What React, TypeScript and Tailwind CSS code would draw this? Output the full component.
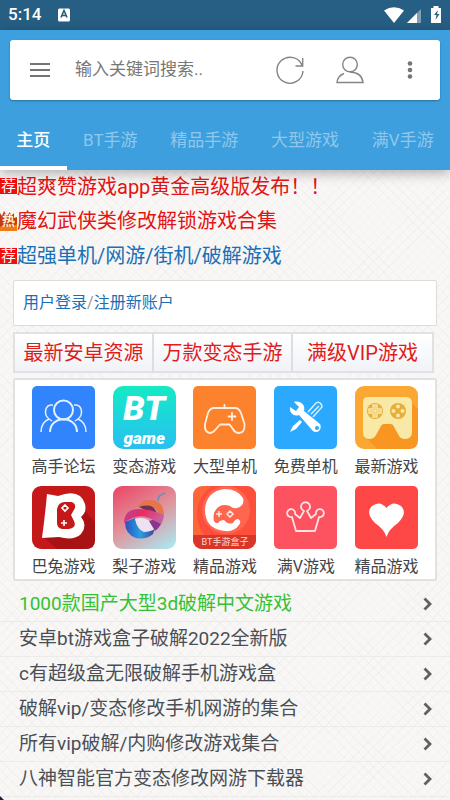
import React from 'react';

const tabs = ['主页', 'BT手游', '精品手游', '大型游戏', '满V手游'];

const links = [
  '1000款国产大型3d破解中文游戏',
  '安卓bt游戏盒子破解2022全新版',
  'c有超级盒无限破解手机游戏盒',
  '破解vip/变态修改手机网游的集合',
  '所有vip破解/内购修改游戏集合',
  '八神智能官方变态修改网游下载器',
];

function StatusBar() {
  return (
    <div className="flex h-[30px] items-center bg-[#265f83] px-2 text-white">
      <span className="text-[17px] font-medium">5:14</span>
      <svg className="ml-4 h-[14px] w-[14px]" viewBox="0 0 14 14" aria-hidden="true">
        <rect x="1" y="0.500" width="12" height="13" rx="1.500" fill="#fff" />
        <path d="M4 9.500L7 2.500l3 7M5 7.500h4" fill="none" stroke="#265f83" strokeWidth="1.600" />
      </svg>
      <svg className="ml-auto h-[18px] w-[58px]" viewBox="0 0 58 18" aria-hidden="true">
        <path d="M0 4.500Q10 -2 20 4.500L10 17z" fill="#fff" />
        <path d="M37 3v14H23z" fill="#7fa1b6" />
        <path d="M33 7v10H23z" fill="#fff" />
        <path d="M47 2h2.500V0h5v2H57v15H47z" fill="#fff" />
        <path d="M54 4l-4 5h2.500l-1 5 4-6H53z" fill="#265f83" />
      </svg>
    </div>
  );
}

function Header() {
  return (
    <header className="relative bg-[#3d9fdd] pt-[10px] shadow-[0_3px_12px_rgba(0,0,0,0.3)]">
      <div className="mx-[10px] flex h-[60px] items-center rounded-[3px] bg-white pr-[25px] pl-5 shadow-[0_1px_2px_rgba(0,0,0,0.3)]">
        <button aria-label="菜单" className="h-5 w-5 shrink-0">
          <svg viewBox="0 0 20 20" className="h-5 w-5" stroke="#757575" strokeWidth="2">
            <path d="M0 4h20M0 10h20M0 16h20" />
          </svg>
        </button>
        <input
          aria-label="搜索"
          placeholder="输入关键词搜索.."
          className="ml-[25px] min-w-0 flex-1 bg-transparent text-[17px] outline-none placeholder:text-[#777]"
        />
        <button aria-label="刷新" className="h-7 w-7 shrink-0">
          <svg viewBox="0 0 28 28" className="h-7 w-7" fill="none" stroke="#858585" strokeWidth="1.400">
            <path d="M27 15A13 13 0 1 1 26.300 10M26.700 2v8H19.500" />
          </svg>
        </button>
        <button aria-label="用户" className="ml-8 h-7 w-7 shrink-0">
          <svg viewBox="0 0 28 28" className="h-7 w-7" fill="none" stroke="#858585" strokeWidth="1.400">
            <circle cx="14" cy="8.500" r="7.300" />
            <path d="M8 17.500Q1.500 20 1 26.500h26Q26 16.500 14 16" />
          </svg>
        </button>
        <button aria-label="更多" className="ml-[41px] h-5 w-[10px] shrink-0">
          <svg viewBox="0 0 10 20" className="h-5 w-[10px]" fill="#757575">
            <circle cx="5" cy="3.500" r="2.300" />
            <circle cx="5" cy="10" r="2.300" />
            <circle cx="5" cy="16.500" r="2.300" />
          </svg>
        </button>
      </div>
      <nav className="mt-[10px] flex h-[60px]">
        {tabs.map((tab, i) => (
          <button
            key={tab}
            className={
              i === 0
                ? 'flex-auto border-b-4 border-white pt-[6px] text-[17px] font-medium whitespace-nowrap text-white'
                : 'flex-auto border-b-4 border-transparent pt-[6px] text-[17px] whitespace-nowrap text-[#8fc8ec]'
            }
          >
            {tab}
          </button>
        ))}
      </nav>
    </header>
  );
}

function RecommendBadge() {
  return (
    <span className="mb-[2px] flex h-4 w-[17px] shrink-0 items-center justify-center bg-[#f00f0f] text-[15px] leading-4 text-white">
      荐
    </span>
  );
}

function HotBadge() {
  return (
    <span className="relative mb-[2px] flex h-5 w-[17px] shrink-0 items-center justify-center text-[13px] leading-4 font-bold text-[#fff0d0]">
      <svg className="absolute inset-0 h-5 w-[17px]" viewBox="0 0 17 20" aria-hidden="true">
        <path d="M0 20V2l2 3 2-5 3 5 3-4 1 4 3-3v5l3-1v14z" fill="#c83a10" />
        <path d="M0 16l3-2 3 2 3-2 3 2 5-3v7H0z" fill="#ef7b15" />
      </svg>
      <span className="relative">热</span>
    </span>
  );
}

function Notices() {
  return (
    <div className="text-[20px] leading-[35px] whitespace-nowrap">
      <a href="#n1" className="flex h-[34px] items-center text-[#e41414]">
        <RecommendBadge />
        超爽赞游戏app黄金高级版发布！！
      </a>
      <a href="#n2" className="flex items-center text-[#e41414]">
        <HotBadge />
        魔幻武侠类修改解锁游戏合集
      </a>
      <a href="#n3" className="flex items-center text-[#1a6fb5]">
        <RecommendBadge />
        超强单机/网游/街机/破解游戏
      </a>
    </div>
  );
}

const iconBox = 'h-[63px] w-[63px]';

function ForumIcon() {
  return (
    <svg viewBox="0 0 63 63" className={iconBox} aria-hidden="true">
      <rect width="63" height="63" rx="5" fill="#3184fb" />
      <g fill="none" stroke="#e4f0ff" strokeWidth="1.500">
        <g strokeWidth="2">
          <circle cx="31.500" cy="24" r="9.500" />
          <path d="M18 46C18 29 45 29 45 46" />
        </g>
        <path d="M21 19C13 18 11 28 17 33C12 35 9 40 9 46M17 33l3 2M42 19C50 18 52 28 46 33C51 35 54 40 54 46M46 33l-3 2" />
      </g>
    </svg>
  );
}

function BtGameIcon() {
  return (
    <div className="flex h-[63px] w-[63px] flex-col items-center justify-center rounded-[10px] bg-linear-to-b from-[#16eac4] to-[#29bff0] font-black text-white italic">
      <span className="text-[34px] leading-10">BT</span>
      <span className="text-[17px] leading-5">game</span>
    </div>
  );
}

function PadIcon() {
  return (
    <svg viewBox="0 0 63 63" className={iconBox} aria-hidden="true">
      <rect width="63" height="63" rx="5" fill="#fd822e" />
      <g fill="none" stroke="#fff0df" strokeWidth="1.800" strokeLinejoin="round" strokeLinecap="round">
        <path d="M21 22H42Q46 22 48 27L51.500 38Q52 47 46 47Q42 47 40 43L36.500 38.500H27L23 43Q20 47 17 47Q11 46 12 38L15 27Q17 22 21 22ZM31.500 22V19" />
        <path d="M39 27v7M35.500 30.500h7" />
      </g>
    </svg>
  );
}

function ToolsIcon() {
  return (
    <svg viewBox="0 0 63 63" className={iconBox} aria-hidden="true">
      <rect width="63" height="63" rx="5" fill="#2ba9ff" />
      <path d="M34 26l8-9q3-2 5 1t0 4l-8 9M37 28l8-8" fill="none" stroke="#d5efff" strokeWidth="1.500" />
      <path d="M16 46l3-6 7-6 2 2-6 7z" fill="#fff" />
      <path d="M20 16l5 5-3 4-6-4c-1 6 4 10 9 8l13 15c4 5 11 0 8-6L30 25c2-6-4-11-10-9z" fill="#fff" />
      <circle cx="43" cy="42" r="2" fill="#2ba9ff" />
    </svg>
  );
}

function LatestIcon() {
  return (
    <svg viewBox="0 0 63 63" className={iconBox} aria-hidden="true">
      <rect width="63" height="63" rx="9" fill="#fba832" />
      <path d="M55 15l8 8v31q0 9-9 9H22L10 50z" fill="#f99622" />
      <path d="M12 11H51Q57 11 57 17V46Q57 53 50 53Q45 53 43 48L38 39Q37 38 35 38H29Q27 38 26 40L21 49Q19 53 14 53Q8 53 8 46V17Q8 11 12 11Z" fill="#f9e9a6" />
      <circle cx="20" cy="25" r="8" fill="#e8ad3a" />
      <circle cx="43" cy="25" r="8" fill="#e8ad3a" />
      <path d="M18 19h4v4h4v4h-4v4h-4v-4h-4v-4h4zM20 20v10M15 25h10" fill="none" stroke="#f9e9a6" strokeWidth="1.500" />
      <g fill="#f9e9a6">
        <circle cx="43" cy="20.500" r="2" />
        <circle cx="43" cy="29.500" r="2" />
        <circle cx="38.500" cy="25" r="2" />
        <circle cx="47.500" cy="25" r="2" />
      </g>
    </svg>
  );
}

function RabbitIcon() {
  return (
    <svg viewBox="0 0 63 63" className={iconBox} aria-hidden="true">
      <rect width="63" height="63" rx="9" fill="#c51919" />
      <path d="M52 24l11 12v18q0 9-9 9H25L10 50z" fill="#a91215" />
      <path d="M15 8L26 10Q48 2 53 18Q55 26 49 31Q56 39 49 48Q42 55 27 51L10 52Q13 30 15 8Z" fill="#fff" />
      <path d="M32 16H39Q44 17 43 22L39 29L42 35Q45 42 37 43H30Q25 42 25 37V23Q26 17 32 16Z" fill="#c51919" />
      <path d="M33 19l3 3-3 3-3-3zM32 34v6M29 37h6" fill="none" stroke="#fff" strokeWidth="1.600" />
    </svg>
  );
}

function PearIcon() {
  return (
    <svg viewBox="0 0 63 63" className={iconBox} aria-hidden="true">
      <defs>
        <linearGradient id="pearBg" x1="0.200" y1="0" x2="0.800" y2="1">
          <stop offset="0" stopColor="#ea4f6c" />
          <stop offset="0.500" stopColor="#e0949c" />
          <stop offset="1" stopColor="#b0e0ea" />
        </linearGradient>
        <linearGradient id="pearBand" x1="0" y1="0" x2="1" y2="0.300">
          <stop offset="0" stopColor="#b0459f" />
          <stop offset="0.500" stopColor="#e72d62" />
          <stop offset="1" stopColor="#c8609f" />
        </linearGradient>
        <linearGradient id="pearBase" x1="0" y1="0" x2="1" y2="0">
          <stop offset="0" stopColor="#2b4fc0" />
          <stop offset="0.500" stopColor="#2a9fe0" />
          <stop offset="1" stopColor="#4a3a95" />
        </linearGradient>
      </defs>
      <rect width="63" height="63" rx="9" fill="url(#pearBg)" />
      <path d="M24 21Q29 13 38 14Q51 15 51 29L45 27Q44 19 24 21Z" fill="#e8744a" />
      <path d="M26 21Q41 16 44 28L36 26Z" fill="#743059" />
      <path d="M12 36L22 32Q24 44 31 46Q39 44 43 38L40 48Q33 54 23 52Q12 48 12 36Z" fill="url(#pearBase)" />
      <path d="M22 33Q30 30 38 36L46 39Q41 46 31 46Q24 43 22 33Z" fill="#ece3f2" />
      <path d="M36 35L50 31Q49 40 42 45Z" fill="#8a3590" />
      <path d="M11 37Q11 23 26 23Q38 23 51 29Q51 33 48 38Q42 35 36 32Q24 27 11 37Z" fill="url(#pearBand)" />
      <path d="M45 15q0-5 3-6l4-2" fill="none" stroke="#6a8fb3" strokeWidth="1.500" />
    </svg>
  );
}

function BoxIcon() {
  return (
    <div className="relative h-[63px] w-[63px] overflow-hidden rounded-[9px]">
      <svg viewBox="0 0 63 63" className={iconBox} aria-hidden="true">
        <rect width="63" height="63" fill="#fc6638" />
        <circle cx="38" cy="28" r="34" fill="#fd4f3c" />
        <circle cx="33" cy="24" r="24" fill="#fe6650" />
        <path d="M0 49h63v14H0z" fill="#d93528" />
        <path d="M32 3Q44 3 50 12Q52 20 44 22Q40 23 37 20Q26 16 21 27Q19 38 25 37Q27 34 31 34Q35 39 40 37Q42 33 45 33Q49 35 46 39Q41 46 32 45Q12 43 12 24Q13 5 32 3Z" fill="#fff" />
        <path d="M26 25v6M23 28h6M37 25l3 3-3 3-3-3z" fill="none" stroke="#ffe9e4" strokeWidth="1.500" />
      </svg>
      <span className="absolute inset-x-0 bottom-0 text-center text-[9px] leading-[14px] whitespace-nowrap text-[#ffd8ce]">BT手游盒子</span>
    </div>
  );
}

function CrownIcon() {
  return (
    <svg viewBox="0 0 63 63" className={iconBox} aria-hidden="true">
      <rect width="63" height="63" rx="5" fill="#fd5260" />
      <path
        d="M22 45L18 31A4 4 0 1 1 21 28L26 32L30 25A4.500 4.500 0 1 1 33 25L37 32L42 28A4 4 0 1 1 45 31L41 45Z"
        fill="none"
        stroke="#ffe3e5"
        strokeWidth="1.800"
        strokeLinejoin="round"
      />
    </svg>
  );
}

function HeartIcon() {
  return (
    <svg viewBox="0 0 63 63" className={iconBox} aria-hidden="true">
      <rect width="63" height="63" rx="5" fill="#fe4848" />
      <path d="M31.500 51Q29 43 20 37Q10 27 17 20Q25 14 31.500 22Q38 14 46 20Q53 27 43 37Q34 43 31.500 51Z" fill="#fff" />
    </svg>
  );
}

const apps = [
  { name: '高手论坛', Icon: ForumIcon },
  { name: '变态游戏', Icon: BtGameIcon },
  { name: '大型单机', Icon: PadIcon },
  { name: '免费单机', Icon: ToolsIcon },
  { name: '最新游戏', Icon: LatestIcon },
  { name: '巴兔游戏', Icon: RabbitIcon },
  { name: '梨子游戏', Icon: PearIcon },
  { name: '精品游戏', Icon: BoxIcon },
  { name: '满V游戏', Icon: CrownIcon },
  { name: '精品游戏', Icon: HeartIcon },
];

export default function App() {
  return (
    <div className="relative h-screen overflow-hidden bg-[#f8f7f5] bg-[repeating-linear-gradient(45deg,rgba(0,0,0,0.018)_0px_1px,transparent_1px_7px),repeating-linear-gradient(-45deg,rgba(0,0,0,0.018)_0px_1px,transparent_1px_7px)] font-[Roboto,'Noto_Sans_CJK_SC',sans-serif]">
      <StatusBar />
      <Header />
      <main>
        <Notices />
        <div className="mx-[13px] mt-[6px] flex h-[46px] items-center rounded-[2px] border border-[#dcdcdc] bg-white px-[9px] text-base text-[#999]">
          <a href="#login" className="text-[#1a6fb5]">用户登录</a>/
          <a href="#register" className="text-[#1a6fb5]">注册新账户</a>
        </div>
        <div className="mr-4 ml-[13px] mt-[6px] grid h-[41px] grid-cols-3 divide-x-2 divide-[#dcdee0] border-2 border-[#dfe1e3] bg-linear-to-b from-white to-[#f0f3f7] text-[20px] whitespace-nowrap text-[#e01c1c]">
          <button>最新安卓资源</button>
          <button>万款变态手游</button>
          <button>满级VIP游戏</button>
        </div>
        <div className="mx-[13px] mt-[5px] grid grid-cols-5 gap-y-[7px] rounded-[2px] border-2 border-[#e0e1e3] bg-white px-2 pt-[6px]">
          {apps.map(({ name, Icon }, i) => (
            <a key={i} href={`#app${i}`} className="flex flex-col items-center text-base text-[#444]">
              <Icon />
              <span className="mt-[6px] whitespace-nowrap">{name}</span>
            </a>
          ))}
        </div>
        <ul className="mt-[6px] whitespace-nowrap">
          {links.map((text, i) => (
            <li key={text} className="border-b border-[#ebebea]">
              <a
                href={`#link${i}`}
                className={
                  i === 0
                    ? 'flex h-[34px] items-center justify-between pr-[18px] pl-[19px] text-[19px] text-[#33c233]'
                    : 'flex h-[34px] items-center justify-between pr-[18px] pl-[19px] text-[19px] text-[#4a4f57]'
                }
              >
                {text}
                <svg viewBox="0 0 9 14" className="h-[14px] w-[9px]" fill="none" stroke="#606060" strokeWidth="2.800" aria-hidden="true">
                  <path d="M1.500 1.500L7 7l-5.500 5.500" />
                </svg>
              </a>
            </li>
          ))}
        </ul>
      </main>
      <svg className="absolute bottom-0 left-0 h-1 w-1" viewBox="0 0 4 4" aria-hidden="true">
        <path d="M0 0l4 4H0z" fill="#14233a" />
      </svg>
    </div>
  );
}
